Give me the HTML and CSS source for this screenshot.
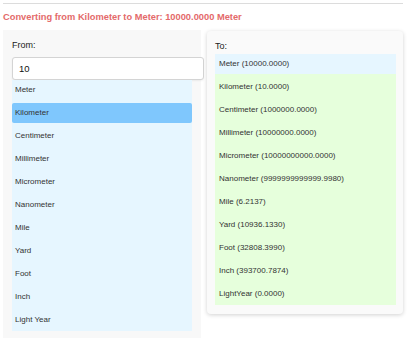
FILE: index.html
```html
<!DOCTYPE html>
<html lang="en">

<head>
    <meta charset="UTF-8">
    <meta name="viewport" content="width=device-width, initial-scale=1.0">
    <title>Length Converter</title>
    <link rel="stylesheet" href="styles.css">
</head>

<body>
    <hr class="top-line">
    <div class="result">Converting from Kilometer to Meter: 10000.0000 Meter</div>
    <div class="converter">
        <div class="from-panel">
            <label class="panel-label">From:</label>
            <input class="amount" type="text" value="10">
            <ul class="unit-list from-list">
                <li>Meter</li>
                <li class="selected">Kilometer</li>
                <li>Centimeter</li>
                <li>Millimeter</li>
                <li>Micrometer</li>
                <li>Nanometer</li>
                <li>Mile</li>
                <li>Yard</li>
                <li>Foot</li>
                <li>Inch</li>
                <li>Light Year</li>
            </ul>
        </div>
        <div class="to-panel">
            <label class="panel-label">To:</label>
            <ul class="unit-list to-list">
                <li class="selected">Meter (10000.0000)</li>
                <li>Kilometer (10.0000)</li>
                <li>Centimeter (1000000.0000)</li>
                <li>Millimeter (10000000.0000)</li>
                <li>Micrometer (10000000000.0000)</li>
                <li>Nanometer (9999999999999.9980)</li>
                <li>Mile (6.2137)</li>
                <li>Yard (10936.1330)</li>
                <li>Foot (32808.3990)</li>
                <li>Inch (393700.7874)</li>
                <li>LightYear (0.0000)</li>
            </ul>
        </div>
    </div>
</body>

</html>
```

FILE: styles.css
```css
body {
    font-family: "Liberation Sans", Arial, sans-serif;
    margin: 0;
    padding: 3px 5px 0 3px;
    background-color: #fff;
    color: #333;
    overflow: hidden;
}

.top-line {
    margin: 0;
    border: none;
    border-top: 1px solid #dcdcdc;
}

.result {
    margin-top: 8px;
    font-size: 9.3px;
    line-height: 11px;
    font-weight: bold;
    color: #e46a6a;
}

.converter {
    display: flex;
    align-items: flex-start;
    gap: 6px;
    margin-top: 7px;
}

.from-panel {
    width: 180px;
    padding: 9px 9px 9px 9px;
    background-color: #f8f8f8;
}

.to-panel {
    width: 181px;
    padding: 9px 7px 9px 8px;
    margin-top: 1px;
    background-color: #fafafa;
    border-radius: 4px;
    box-shadow: 0 1px 4px rgba(0, 0, 0, 0.18);
}

.panel-label {
    display: block;
    font-size: 9px;
    line-height: 12px;
    color: #222;
}

.from-panel .panel-label {
    margin-bottom: 6px;
}

.to-panel .panel-label {
    margin-bottom: 2px;
}

.amount {
    display: block;
    box-sizing: border-box;
    width: 192px;
    height: 23px;
    margin: 0;
    padding: 0 6px;
    font-family: "Liberation Sans", Arial, sans-serif;
    font-size: 9.5px;
    color: #111;
    background-color: #fff;
    border: 1px solid #d4d4d4;
    border-radius: 3px;
    box-shadow: 0 1px 2px rgba(0, 0, 0, 0.06);
    outline: none;
}

.unit-list {
    list-style-type: none;
    margin: 0;
    padding: 0 0 1px 0;
    display: flex;
    flex-direction: column;
    gap: 3px;
}

.unit-list li {
    height: 20px;
    line-height: 20px;
    padding-left: 3px;
    font-size: 8px;
    color: #333;
    border-radius: 2px;
}

.from-list {
    background-color: #e6f6ff;
}

.from-list li.selected {
    background-color: #7fc7fd;
}

.to-list {
    background-color: #e6ffdc;
}

.to-list li {
    padding-left: 4px;
    border-radius: 0;
}

.to-list li.selected {
    background-color: #e6f6ff;
}
```
